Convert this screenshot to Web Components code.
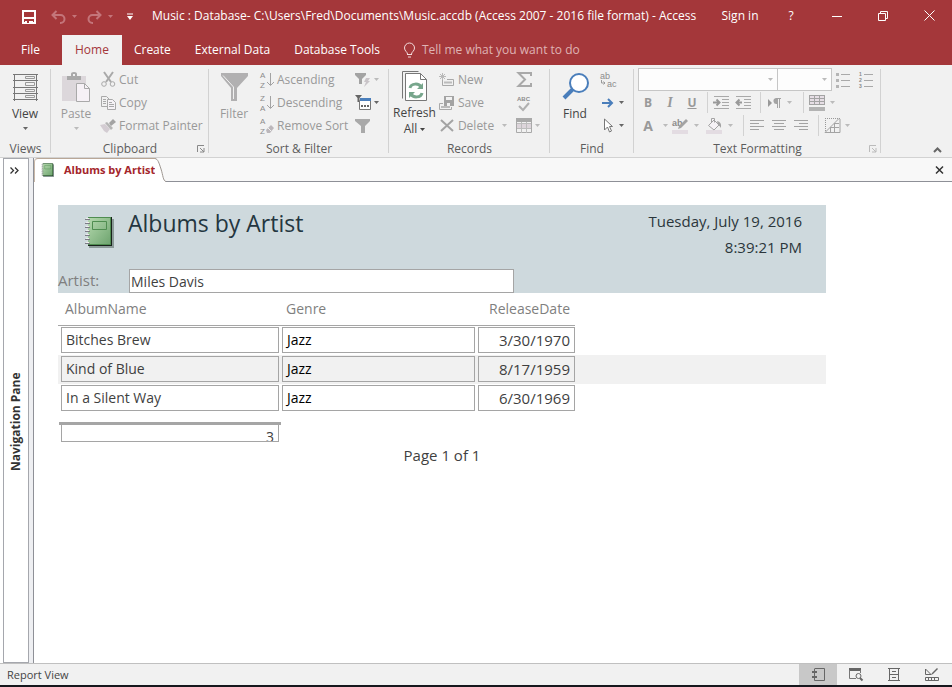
<!DOCTYPE html>
<html lang="en">
<head>
<meta charset="utf-8">
<meta name="viewport" content="width=device-width, initial-scale=1">
<title>Music : Database - Access</title>
<style>
  body {
    margin: 0;
    font: 12px/16px "Open Sans", "Noto Sans", sans-serif;
    color: #444;
  }
</style>
</head>
<body>
<access-window></access-window>

<script>
const svg = (w, h, body) =>
  `<svg width="${w}" height="${h}" viewBox="0 0 ${w} ${h}" fill="none" aria-hidden="true">${body}</svg>`

const notebook = (w, h) => /* html */`
  <svg width="${w}" height="${h}" viewBox="0 0 30 32" fill="none" aria-hidden="true">
    <defs><linearGradient id="g" x1="0" y1="0" x2="1" y2="1"><stop offset="0" stop-color="#b5d9ae"/><stop offset="1" stop-color="#6fa570"/></linearGradient></defs>
    <path d="M5 3h25v29H5z" fill="#8b9a98"/>
    <path d="M4 1h24v29H4z" fill="#18221a"/>
    <path d="M4 1h23v28H4z" fill="#4f8d50"/>
    <path d="M4 2h22v26H4z" fill="url(#g)"/>
    <path d="M8.500 5.500h14v8h-14z" stroke="#4f8d50"/>
    <path d="M1 3.500h5M1 7.500h5M1 11.500h5M1 15.500h5M1 19.500h5M1 23.500h5M1 27.500h5" stroke="#7b7c84"/>
    <path d="M2 2.500h3M2 6.500h3M2 10.500h3M2 14.500h3M2 18.500h3M2 22.500h3M2 26.500h3" stroke="#eee"/>
  </svg>`

const sortText = (top, bottom) => `
  <g font-family="Liberation Sans" font-size="8" fill="#8c8c8c"><text x="1" y="7">${top}</text><text x="1" y="17">${bottom}</text></g>`

const ICONS = {
  caret: svg(5, 3, '<path d="M0 0h5L2.500 3z" fill="currentColor"/>'),
  disk: svg(14, 14, '<path d="M1 1h12v12H1z" stroke="#fff" stroke-width="2"/><path d="M1 7h12v2H1zM3 11h8v3H3z" fill="#fff"/><path d="M5 11h2v2H5z" fill="#a4373a"/><path d="M7 11h2v2H7z" fill="#fff"/>'),
  undo: svg(15, 14, '<path d="M5.500 1 1.500 5l4 4M2 5h7.500a4 4 0 0 1 0 8H9" stroke="#c4757a" stroke-width="2"/>'),
  redo: svg(15, 14, '<path d="m9.500 1 4 4-4 4M13 5H5.500a4 4 0 0 0 0 8H6" stroke="#c4757a" stroke-width="2"/>'),
  customize: svg(6, 7, '<path d="M0 1h6" stroke="#fff"/><path d="M0 3h6L3 7z" fill="#fff"/>'),
  minimize: svg(10, 10, '<path d="M0 5.500h10" stroke="#fff"/>'),
  restore: svg(10, 10, '<path d="M.5 2.500h7v7h-7zM2.500 2.500v-2h7v7h-2" stroke="#fff"/>'),
  close: svg(11, 11, '<path d="m.5.5 10 10M10.500.5l-10 10" stroke="#fff"/>'),
  bulb: svg(11, 15, '<path d="M3.500 11c0-2-3-3-3-6a5 5 0 0 1 10 0c0 3-3 4-3 6M3 11.500h5M4 14h3" stroke="#f3dcdd"/>'),
  view: svg(25, 27, '<path d="M0 .5h25M0 6.500h25M0 13.500h25M0 19.500h25M0 25.500h25M1.500 0v27M23.500 0v27" stroke="#777"/><path d="M12.500 2.500h9v2h-9zM12.500 8.500h9v3h-9zM12.500 15.500h9v2h-9zM12.500 21.500h9v2h-9z" stroke="#999"/>'),
  paste: svg(28, 30, '<path d="M0 4h24v25H0z" fill="#dcd7db"/><path d="M5 8V4h4V2q0-2 3-2t3 2v2h4v4z" fill="#a9a9a9"/><path d="M11 2h2v2h-2z" fill="#f1f1f1"/><path d="M14.500 11.500h8l5 5v13h-13z" fill="#f6f1f6" stroke="#a9a9a9"/><path d="M22.500 11.500v5h5" stroke="#a9a9a9"/>'),
  cut: svg(15, 15, '<path d="m3 0 7 10M12 0 5 10" stroke="#a9a9a9" stroke-width="2"/><circle cx="3" cy="12" r="2.300" stroke="#a9a9a9"/><circle cx="11.500" cy="12" r="2.300" stroke="#a9a9a9"/>'),
  copy: svg(15, 14, '<path d="M6 10.500H.5V.5h5l3 3" stroke="#a9a9a9"/><path d="M6.500 3.500h5l3 3v7h-8z" fill="#f5f2f5" stroke="#a9a9a9"/><path d="M2 3.500h3M2 5.500h3M2 7.500h3M8 6.500h3M8 8.500h5M8 10.500h5" stroke="#a9a9a9"/>'),
  painter: svg(16, 14, '<path d="m0 6 5-1 5 5-3 4-3-2z" fill="#d3ccd2"/><path d="m5 4 2-1 6 6-2 2z" fill="#b5b5b5"/><path d="m9 4 4-4 3 3-5 4z" fill="#a3a3a3"/>'),
  filter: svg(27, 28, '<path d="M0 0h27v3L16 15v13h-6V15L0 3z" fill="#b1b0b1"/><path d="M2 2.500 12.500 14v12" stroke="#f1f1f1"/>'),
  asc: svg(15, 18, sortText('A', 'Z') + '<path d="M11.500 2v12M8 11l3.500 3.500L15 11" stroke="#a3a3a3"/>'),
  desc: svg(15, 18, sortText('Z', 'A') + '<path d="M11.500 2v12M8 11l3.500 3.500L15 11" stroke="#a3a3a3"/>'),
  unsort: svg(15, 18, sortText('A', 'Z') + '<path d="m7 13 5-5 3 3-4 5H8z" fill="#bcb7bb"/><path d="m9 11 3 3" stroke="#f1f1f1"/>'),
  selection: svg(16, 16, '<path d="M0 1h11v2L7 7v5H4V7L0 3z" fill="#a3a3a3"/><path d="m11 6h4l-2 3h2l-6 6 2-5H9z" fill="#c9c4c8"/>'),
  advanced: svg(16, 16, '<path d="M0 0h7L4.500 3v4h-2V3z" fill="#666"/><path d="M4.500 5.500h11v9h-11z" fill="#fff" stroke="#777"/><path d="M5 3h11v3H5z" fill="#4a7ebb"/><path d="M6 11h2M9 11h2M12 11h2" stroke="#666" stroke-width="2"/>'),
  toggle: svg(16, 14, '<path d="M0 0h15v2L10 7v7H6V7L0 2z" fill="#a9a9a9"/>'),
  refresh: svg(25, 31, '<path d="M.5 27.500V.5h16" stroke="#777"/><path d="M3.500 2.500h15l6 6v21h-21z" fill="#fff" stroke="#777"/><path d="M18.500 2.500v6h6" stroke="#777"/><path d="M8 17c1-5 9-5 11-1M20 22c-1 5-9 5-11 1" stroke="#77a68c" stroke-width="3"/><path d="M21 12v6h-6zM7 27v-6h6z" fill="#77a68c"/>'),
  newrec: svg(15, 14, '<path d="M3.500 6v6.500h11v-6H8" stroke="#a9a9a9"/><path d="M5 8.500h8v2H5z" fill="#bbb"/><path d="M3.500 0v7M0 3.500h7M1 1l5 5M6 1 1 6" stroke="#b9b9b9"/>'),
  saverec: svg(16, 16, '<path d="M4 8.500H.5v6h12V12" stroke="#a9a9a9"/><path d="M2 11h9v2H2z" fill="#bbb"/><path d="M5 1h10v10H5z" fill="#a3a3a3"/><path d="M7 2h6v3H7zM8 8h3v3H8z" fill="#f1f1f1"/>'),
  del: svg(14, 13, '<path d="m1 1 12 11M13 1 1 12" stroke="#a3a3a3" stroke-width="2"/>'),
  sum: svg(15, 15, '<path d="M14 4V1H1.500L8 7.500 1.500 14H14v-3" stroke="#a9a9a9" stroke-width="2"/>'),
  spell: svg(16, 18, '<text x="1" y="7" font-size="6" font-weight="bold" font-family="Liberation Sans" fill="#8c8c8c">ABC</text><path d="m3 12 4 4 6-7" stroke="#b0b0b0" stroke-width="2"/>'),
  more: svg(16, 15, '<path d="M.5.5h15v14H.5z" stroke="#a9a9a9"/><path d="M0 0h16v4H0z" fill="#a9a9a9"/><path d="M1 6h14v4H1z" fill="#ddd5db"/><path d="M1 5.500h14M1 10.500h14M5.500 4v11M10.500 4v11" stroke="#bdbdbd"/>'),
  find: svg(27, 28, '<path d="m11 16-9 9" stroke="#4a7ebb" stroke-width="4"/><circle cx="17" cy="10" r="9" fill="#fff" stroke="#4a7ebb" stroke-width="2"/>'),
  replace: svg(17, 18, '<g font-family="Liberation Sans" font-size="9" fill="#8c8c8c"><text x="0" y="8">ab</text><text x="7" y="16">ac</text></g><path d="M1.500 9v3H5M3.500 10.500 5 12l-1.500 1.500" stroke="#999"/>'),
  goto: svg(12, 10, '<path d="M0 5h10M6 1l4 4-4 4" stroke="#4a7ebb" stroke-width="2"/>'),
  pointer: svg(10, 15, '<path d="M1.500 1v11l3-3 2 5 2-1-2-4.500h3z" fill="#fff" stroke="#777"/>'),
  bullets: svg(14, 16, '<path d="M5 2.500h9M5 8.500h9M5 14.500h9" stroke="#a9a9a9"/><path d="M0 2.500h3M0 8.500h3M0 14.500h3" stroke="#b5b5b5" stroke-width="3"/>'),
  numbers: svg(15, 18, '<path d="M6 3.500h9M6 9.500h9M6 15.500h9" stroke="#a9a9a9"/><g font-family="Liberation Sans" font-size="5" font-weight="bold" fill="#888"><text x="1" y="5">1</text><text x="1" y="11">2</text><text x="1" y="17">3</text></g>'),
  indent: svg(17, 13, '<path d="M1 .5h15M9 3.500h7M9 6.500h7M9 9.500h7M1 12.500h15" stroke="#a9a9a9"/><path d="M0 6.500h6M3.500 3.500l3 3-3 3" stroke="#999" stroke-width="2"/>'),
  outdent: svg(17, 13, '<path d="M1 .5h15M9 3.500h7M9 6.500h7M9 9.500h7M1 12.500h15" stroke="#a9a9a9"/><path d="M1 6.500h6M4.500 3.500l-3 3 3 3" stroke="#999" stroke-width="2"/>'),
  direction: svg(13, 10, '<path d="M0 1v8l4-4z" fill="#999"/><path d="M8 0h5v1h-1v9h-1V1h-1v9H9V6a3 3 0 0 1-1-6" fill="#a3a3a3"/>'),
  gridfill: svg(16, 16, '<path d="M0 0h16v10H0z" fill="#a3a3a3"/><path d="M1 1h4v2H1zM6 1h4v2H6zM11 1h4v2h-4zM1 4h4v2H1zM6 4h4v2H6zM11 4h4v2h-4zM1 7h4v2H1zM6 7h4v2H6zM11 7h4v2h-4z" fill="#e6dee5"/><path d="M0 12h16v4H0z" fill="#b3b3b3"/>'),
  highlight: svg(17, 18, '<path d="M0 13h16v4H0z" fill="#e3dce2"/><text x="0" y="9" font-size="9" font-weight="bold" font-family="Liberation Sans" fill="#8c8c8c">ab</text><path d="m14 2 2 2-7 7-3 1 1-3z" fill="#a3a3a3"/>'),
  bucket: svg(17, 18, '<path d="M0 13h16v4H0z" fill="#e3dce2"/><path d="M2.500 8.500 8 3l5 5-5 5zM5.500 6V1.500h3v4" fill="#f5f2f5" stroke="#a3a3a3"/><path d="M11 4q5 1 4 7-1-2-3-3z" fill="#a3a3a3"/>'),
  left: svg(14, 11, '<path d="M0 .5h14M0 3.500h9M0 6.500h14M0 9.500h9" stroke="#a3a3a3"/>'),
  center: svg(14, 11, '<path d="M0 .5h14M2 3.500h10M0 6.500h14M2 9.500h10" stroke="#a3a3a3"/>'),
  right: svg(14, 11, '<path d="M0 .5h14M5 3.500h9M0 6.500h14M5 9.500h9" stroke="#a3a3a3"/>'),
  gridlines: svg(15, 15, '<path d="M0 .5h15M.5 0v15" stroke="#999" stroke-dasharray="1 1"/><path d="M0 14.500h15V1M0 14.500l14-14M5.500 9v5M9.500 5v9M5 9.500h9M9 5.500h5" stroke="#a3a3a3"/>'),
  launcher: svg(8, 8, '<path d="M.5 7V.5H7" stroke="currentColor"/><path d="M3 3l4 4M7 3v4H3" stroke="currentColor"/>'),
  collapse: svg(9, 6, '<path d="m1 5 3.500-3.500L8 5" stroke="#666" stroke-width="2"/>'),
  expand: svg(9, 7, '<path d="m.5.5 3 3-3 3M5 .5l3 3-3 3" stroke="#333" stroke-width="1.300"/>'),
  closeTab: svg(9, 8, '<path d="m1 .5 7 7M8 .5l-7 7" stroke="#333" stroke-width="1.500"/>'),
  reportView: svg(13, 13, '<path d="M3 .5h9.500v12H2.500V.5" stroke="#666"/><path d="M0 4h5M0 9h5" stroke="#666" stroke-width="2"/>'),
  preview: svg(14, 13, '<path d="M0 0h12v3H0z" fill="#666"/><path d="M.5 2v8.500H7M11.500 2v3" stroke="#777"/><circle cx="9.500" cy="8" r="2.500" stroke="#666"/><path d="m11 10 2.500 2.500" stroke="#666" stroke-width="2"/>'),
  layout: svg(12, 13, '<path d="M0 .5h12M1 6.500h10M0 12.500h12M1.500 0v13M10.500 0v13" stroke="#666"/><path d="M4 3.500h4M4 9.500h4" stroke="#666"/>'),
  design: svg(14, 13, '<path d="M.5 1v5.500H6zM.5 9.500h13v3H.5zM3.500 10v2M6.500 10v2M9.500 10v2" stroke="#666"/><path d="m6 7 1-2 5-5 1 1-5 5z" fill="#666"/>'),
  notebookBig: notebook(30, 32),
  notebookSmall: notebook(13, 14)
}

// Shared reset for the buttons that live inside each shadow root
const BUTTON_CSS = `
  button {
    border: 0;
    padding: 0;
    background: none;
    font: inherit;
    color: inherit;
    display: flex;
    align-items: center;
    justify-content: center;
  }
  svg { display: block; flex: none; overflow: visible; }
`

class AccessElement extends HTMLElement {
  constructor () {
    super()
    this.shadow = this.attachShadow({ mode: 'open' })
  }

  connectedCallback () {
    this.shadow.innerHTML = this.template()
  }
}

class TitleBar extends AccessElement {
  template () {
    return /* html */`
      <style>
        ${BUTTON_CSS}
        :host {
          display: flex;
          align-items: center;
          height: 35px;
          background: #a4373a;
          color: #fff;
        }
        .quick { display: flex; align-items: center; padding-left: 22px; margin-bottom: 2px; }
        .quick button { height: 20px; }
        .faded { color: #c4757a; gap: 6px; margin-left: 10px; }
        .redo { margin-right: 4px; }
        .quick .undo { margin-left: 15px; }
        h1 { flex: 1; margin: 0 0 4px 19px; font: inherit; white-space: nowrap; overflow: hidden; }
        nav { display: flex; margin-bottom: 4px; }
        nav button { width: 46px; height: 30px; }
        nav .sign { width: 56px; }
      </style>
      <div class="quick">
        <button aria-label="Save">${ICONS.disk}</button>
        <button class="faded undo" aria-label="Undo">${ICONS.undo}${ICONS.caret}</button>
        <button class="faded redo" aria-label="Redo">${ICONS.redo}${ICONS.caret}</button>
        <button class="faded" aria-label="Customize toolbar">${ICONS.customize}</button>
      </div>
      <h1>Music : Database- C:\\Users\\Fred\\Documents\\Music.accdb (Access 2007 - 2016 file format) - Access</h1>
      <nav>
        <button class="sign">Sign in</button>
        <button>?</button>
        <button aria-label="Minimize">${ICONS.minimize}</button>
        <button aria-label="Restore">${ICONS.restore}</button>
        <button aria-label="Close">${ICONS.close}</button>
      </nav>`
  }
}
customElements.define('title-bar', TitleBar)

class RibbonTabs extends AccessElement {
  template () {
    return /* html */`
      <style>
        ${BUTTON_CSS}
        :host {
          display: flex;
          height: 30px;
          background: #a4373a;
          color: #fff;
        }
        button { padding: 0 12px; white-space: nowrap; }
        .file { padding: 0 22px 0 21px; }
        .active { padding: 0 13px; background: #f1f1f1; color: #a4373a; }
        .tell { color: #dfb3b4; gap: 7px; }
      </style>
      <button class="file">File</button>
      <button class="active">Home</button>
      <button>Create</button>
      <button>External Data</button>
      <button>Database Tools</button>
      <button class="tell">${ICONS.bulb}Tell me what you want to do</button>`
  }
}
customElements.define('ribbon-tabs', RibbonTabs)

// attributes: icon, large, menu (draws the caret), off (greyed), label
class RibbonButton extends AccessElement {
  template () {
    const icon = this.getAttribute('icon')
    const label = this.getAttribute('label')
    return /* html */`
      <style>
        ${BUTTON_CSS}
        :host { display: block; color: #444; }
        :host([off]) { color: #999; }
        button { gap: var(--gap, 3px); height: 23px; white-space: nowrap; }
        .icon { display: flex; align-items: center; justify-content: center; min-width: 16px; }
        .caret { color: #666; padding: 0 2px; }
        :host([off]) .caret { color: #bbb; }
        :host([large]) button {
          flex-direction: column;
          justify-content: flex-start;
          gap: 0;
          height: 69px;
          min-width: 42px;
        }
        :host([large]) .icon { height: 38px; }
        :host([large]) .caret { padding: 5px 0; }
      </style>
      <button ${label ? `aria-label="${label}"` : ''}>
        ${icon ? `<span class="icon">${ICONS[icon]}</span>` : ''}
        <slot></slot>
        ${this.hasAttribute('menu') ? `<span class="caret">${ICONS.caret}</span>` : ''}
      </button>`
  }
}
customElements.define('ribbon-button', RibbonButton)

class RibbonGroup extends AccessElement {
  template () {
    const launcher = this.hasAttribute('launcher')
    return /* html */`
      <style>
        ${BUTTON_CSS}
        :host {
          display: grid;
          grid-template-rows: 69px 1fr;
          padding-top: 3px;
          background: linear-gradient(#d2d2d2, #d2d2d2) right 4px / 1px 84px no-repeat;
        }
        .body { display: flex; }
        footer {
          display: grid;
          align-items: end;
          text-align: center;
          color: #5c5c5c;
        }
        :host([launcher]) footer { grid-template-columns: 16px 1fr 16px; }
        :host([launcher]) span { grid-column: 2; }
        footer button { margin-bottom: 4px; color: var(--launcher, #888); }
      </style>
      <div class="body"><slot></slot></div>
      <footer>
        <span>${this.getAttribute('name')}</span>
        ${launcher ? `<button aria-label="${this.getAttribute('name')} options">${ICONS.launcher}</button>` : ''}
      </footer>`
  }
}
customElements.define('ribbon-group', RibbonGroup)

class ComboBox extends AccessElement {
  template () {
    return /* html */`
      <style>
        :host { display: grid; align-items: center; height: 23px; color: #bbb; }
        select, svg { grid-area: 1 / 1; }
        select {
          appearance: none;
          box-sizing: border-box;
          width: 100%;
          height: 23px;
          border: 1px solid #c6c6c6;
          border-radius: 0;
          background: #fdfdfd;
          font: inherit;
        }
        svg { justify-self: end; margin-right: 5px; pointer-events: none; }
      </style>
      <select aria-label="${this.getAttribute('label')}"><option></option></select>
      ${ICONS.caret}`
  }
}
customElements.define('combo-box', ComboBox)

// Refresh All carries its caret on the second line of the caption
class RefreshButton extends AccessElement {
  template () {
    return /* html */`
      <style>
        ${BUTTON_CSS}
        :host { display: block; }
        button { flex-direction: column; justify-content: flex-start; min-width: 42px; height: 69px; }
        .icon { display: flex; align-items: center; height: 38px; }
        .all { display: flex; align-items: center; gap: 3px; }
      </style>
      <button>
        <span class="icon">${ICONS.refresh}</span>
        <span>Refresh</span>
        <span class="all">All ${ICONS.caret}</span>
      </button>`
  }
}
customElements.define('refresh-button', RefreshButton)

class AccessRibbon extends AccessElement {
  template () {
    return /* html */`
      <style>
        ${BUTTON_CSS}
        :host {
          display: flex;
          height: 92px;
          background: #f1f1f1;
          border-bottom: 1px solid #d2d2d2;
        }
        .views { min-width: 51px; }
        .clipboard { min-width: 158px; }
        .sort { min-width: 180px; }
        .records { min-width: 161px; }
        .find { min-width: 84px; }
        .format { min-width: 247px; --launcher: #bbb; }
        .pad { margin-left: 4px; }
        .stack { display: grid; grid-template-rows: repeat(3, 23px); margin-left: 3px; }
        .icons { margin-left: auto; padding-right: 8px; justify-items: start; --gap: 1px; }
        .rows { display: grid; grid-template-rows: repeat(3, 23px); margin-left: 4px; }
        .rows > div { display: flex; align-items: center; }
        .font { width: 140px; margin-right: -1px; }
        .size { width: 55px; margin-right: 3px; }
        .rows ribbon-button { min-width: 22px; }
        .rows ribbon-button[menu] { min-width: 34px; }
        .rows i { width: 1px; height: 21px; margin: 0 5px 0 3px; background: #d2d2d2; }
        b, u, em { min-width: 20px; text-align: center; font-weight: bold; }
        em { font-family: "Liberation Serif", serif; font-size: 14px; }
        .large { font-size: 14px; }
        .collapse { margin: 0 10px 4px auto; align-self: flex-end; }
      </style>
      <ribbon-group class="views" name="Views">
        <ribbon-button class="pad" icon="view" large menu>View</ribbon-button>
      </ribbon-group>
      <ribbon-group class="clipboard" name="Clipboard" launcher>
        <ribbon-button class="pad" icon="paste" large menu off>Paste</ribbon-button>
        <div class="stack">
          <ribbon-button icon="cut" off>Cut</ribbon-button>
          <ribbon-button icon="copy" off>Copy</ribbon-button>
          <ribbon-button icon="painter" off>Format Painter</ribbon-button>
        </div>
      </ribbon-group>
      <ribbon-group class="sort" name="Sort &amp; Filter">
        <ribbon-button class="pad" icon="filter" large off>Filter</ribbon-button>
        <div class="stack">
          <ribbon-button icon="asc" off>Ascending</ribbon-button>
          <ribbon-button icon="desc" off>Descending</ribbon-button>
          <ribbon-button icon="unsort" off>Remove Sort</ribbon-button>
        </div>
        <div class="stack icons">
          <ribbon-button icon="selection" menu off label="Selection"></ribbon-button>
          <ribbon-button icon="advanced" menu label="Advanced"></ribbon-button>
          <ribbon-button icon="toggle" off label="Toggle Filter"></ribbon-button>
        </div>
      </ribbon-group>
      <ribbon-group class="records" name="Records">
        <refresh-button class="pad"></refresh-button>
        <div class="stack">
          <ribbon-button icon="newrec" off>New</ribbon-button>
          <ribbon-button icon="saverec" off>Save</ribbon-button>
          <ribbon-button icon="del" off menu>Delete&nbsp;</ribbon-button>
        </div>
        <div class="stack icons">
          <ribbon-button icon="sum" off label="Totals"></ribbon-button>
          <ribbon-button icon="spell" off label="Spelling"></ribbon-button>
          <ribbon-button icon="more" menu off label="More"></ribbon-button>
        </div>
      </ribbon-group>
      <ribbon-group class="find" name="Find">
        <ribbon-button class="pad" icon="find" large>Find</ribbon-button>
        <div class="stack icons">
          <ribbon-button icon="replace" off label="Replace"></ribbon-button>
          <ribbon-button icon="goto" menu label="Go To"></ribbon-button>
          <ribbon-button icon="pointer" menu label="Select"></ribbon-button>
        </div>
      </ribbon-group>
      <ribbon-group class="format" name="Text Formatting" launcher>
        <div class="rows">
          <div>
            <combo-box class="font" label="Font"></combo-box>
            <combo-box class="size" label="Font Size"></combo-box>
            <ribbon-button icon="bullets" off label="Bullets"></ribbon-button>
            <ribbon-button icon="numbers" off label="Numbering"></ribbon-button>
          </div>
          <div>
            <ribbon-button off><b>B</b></ribbon-button>
            <ribbon-button off><em>I</em></ribbon-button>
            <ribbon-button off><u>U</u></ribbon-button>
            <i></i>
            <ribbon-button icon="indent" off label="Increase Indent"></ribbon-button>
            <ribbon-button icon="outdent" off label="Decrease Indent"></ribbon-button>
            <i></i>
            <ribbon-button icon="direction" menu off label="Text Direction"></ribbon-button>
            <i></i>
            <ribbon-button icon="gridfill" menu off label="Alternate Row Color"></ribbon-button>
          </div>
          <div>
            <ribbon-button menu off><b class="large">A</b></ribbon-button>
            <ribbon-button icon="highlight" menu off label="Highlight"></ribbon-button>
            <ribbon-button icon="bucket" menu off label="Background Color"></ribbon-button>
            <i></i>
            <ribbon-button icon="left" off label="Align Left"></ribbon-button>
            <ribbon-button icon="center" off label="Center"></ribbon-button>
            <ribbon-button icon="right" off label="Align Right"></ribbon-button>
            <i></i>
            <ribbon-button icon="gridlines" menu off label="Gridlines"></ribbon-button>
          </div>
        </div>
      </ribbon-group>
      <button class="collapse" aria-label="Collapse the Ribbon">${ICONS.collapse}</button>`
  }
}
customElements.define('access-ribbon', AccessRibbon)

class NavigationPane extends AccessElement {
  template () {
    return /* html */`
      <style>
        ${BUTTON_CSS}
        :host {
          display: flex;
          flex-direction: column;
          width: 24px;
          margin-left: 3px;
          border: 1px solid #a5a7ad;
          background: #fff;
        }
        .open { height: 23px; padding-right: 4px; }
        .title {
          flex: 1;
          writing-mode: vertical-rl;
          transform: rotate(180deg);
          font-weight: bold;
          color: #333;
        }
      </style>
      <button class="open" aria-label="Open pane">${ICONS.expand}</button>
      <button class="title">Navigation Pane</button>`
  }
}
customElements.define('navigation-pane', NavigationPane)

class DocumentTabs extends AccessElement {
  template () {
    return /* html */`
      <style>
        ${BUTTON_CSS}
        :host {
          display: flex;
          height: 24px;
          background: linear-gradient(#8e9097, #8e9097) bottom / 100% 1px no-repeat #f8f8f8;
        }
        .tab {
          gap: 10px;
          padding: 0 0 2px 6px;
          border-top: 1px solid #b9a797;
          border-left: 1px solid #c9b8a8;
          border-top-left-radius: 4px;
          background: #fff;
          color: #a4262c;
          font-size: 11px;
          font-weight: bold;
        }
        .edge { margin-left: -3px; }
        .close { margin-left: auto; padding: 0 8px; }
      </style>
      <button class="tab">${ICONS.notebookSmall}Albums by Artist</button>
      <svg class="edge" width="14" height="24" viewBox="0 0 14 24" aria-hidden="true">
        <path d="M3 .5C6 1 7 5 9 11s2 12 5 12.500V24H3z" fill="#fff"/>
        <path d="M3 .5C6 1 7 5 9 11s2 12 5 12.500" fill="none" stroke="#9d9690"/>
      </svg>
      <button class="close" aria-label="Close Albums by Artist">${ICONS.closeTab}</button>`
  }
}
customElements.define('document-tabs', DocumentTabs)

const ALBUMS = [
  ['Bitches Brew', 'Jazz', '3/30/1970'],
  ['Kind of Blue', 'Jazz', '8/17/1959'],
  ['In a Silent Way', 'Jazz', '6/30/1969']
]

class AlbumsReport extends AccessElement {
  template () {
    const rows = ALBUMS.map(([name, genre, date]) => /* html */`
      <tr><td><div>${name}</div></td><td class="genre"><div>${genre}</div></td><td class="date"><div>${date}</div></td><td></td></tr>`).join('')
    return /* html */`
      <style>
        svg { display: block; }
        :host {
          display: block;
          max-width: 768px;
          padding: 23px 24px 0;
          font-size: 14px;
          line-height: 20px;
          color: #3f3f3f;
        }
        header {
          display: grid;
          grid-template-columns: 70px 386px 1fr;
          grid-template-rows: 64px 24px;
          background: #ced9dd;
        }
        .logo { padding: 11px 0 0 26px; }
        h2 { margin: 0; font-size: 23px; font-weight: normal; line-height: 36px; color: #243640; }
        .when { text-align: right; padding: 3px 24px 0 0; line-height: 26px; color: #2b363b; }
        .when, label, .date, footer { font-size: 15px; }
        label { color: #7f7f7f; line-height: 22px; }
        input {
          box-sizing: border-box;
          width: 385px;
          height: 24px;
          margin-left: 1px;
          border: 1px solid #a5a5a5;
          padding: 0 1px;
          font: inherit;
          color: #3f3f3f;
        }
        table { width: 100%; border-spacing: 0; table-layout: fixed; }
        th {
          height: 32px;
          padding: 0 5px 0 7px;
          border-bottom: 1px solid #a5a5a5;
          color: #7f7f7f;
          font-weight: normal;
          text-align: left;
        }
        th:last-child { border: 0; }
        .name { width: 209px; }
        .kind { width: 184px; }
        .day { width: 88px; }
        td { padding: 1px 0 2px 3px; }
        td div { height: 24px; line-height: 24px; border: 1px solid #a5a5a5; padding: 0 4px; }
        tbody tr:nth-child(even) { background: #f1f1f1; }
        .genre { color: #000; }
        .date, .day { text-align: right; }
        output {
          box-sizing: border-box;
          display: block;
          width: 222px;
          margin: 9px 0 0 1px;
          border-top: 3px solid #a5a5a5;
          padding: 0 2px;
          text-align: right;
        }
        output div { height: 16px; line-height: 23px; border: 1px solid #a5a5a5; border-top: 0; padding: 0 4px; overflow: hidden; }
        footer { text-align: center; margin-top: 3px; }
      </style>
      <header>
        <div class="logo">${ICONS.notebookBig}</div>
        <h2>Albums by Artist</h2>
        <div class="when">Tuesday, July 19, 2016<br>8:39:21 PM</div>
        <label for="artist">Artist:</label>
        <input id="artist" value="Miles Davis" readonly>
      </header>
      <table>
        <thead><tr><th class="name">AlbumName</th><th class="kind">Genre</th><th class="day">ReleaseDate</th><th></th></tr></thead>
        <tbody>${rows}</tbody>
      </table>
      <output aria-label="Album count"><div>3</div></output>
      <footer>Page 1 of 1</footer>`
  }
}
customElements.define('albums-report', AlbumsReport)

class StatusBar extends AccessElement {
  template () {
    return /* html */`
      <style>
        ${BUTTON_CSS}
        :host {
          display: flex;
          align-items: center;
          height: 21px;
          padding: 0 1px 0 7px;
          background: #f1f1f1;
          border-top: 1px solid #c0c0c0;
          border-bottom: 2px solid #16171d;
          font-size: 11px;
        }
        span { flex: 1; }
        button { width: 38px; height: 21px; }
        .on { background: #c8c8c8; }
      </style>
      <span>Report View</span>
      <button class="on" aria-label="Report View">${ICONS.reportView}</button>
      <button aria-label="Print Preview">${ICONS.preview}</button>
      <button aria-label="Layout View">${ICONS.layout}</button>
      <button aria-label="Design View">${ICONS.design}</button>`
  }
}
customElements.define('status-bar', StatusBar)

class AccessWindow extends AccessElement {
  template () {
    return /* html */`
      <style>
        :host { display: flex; flex-direction: column; height: 100vh; overflow: hidden; background: #fff; }
        .work { flex: 1; display: flex; min-height: 0; }
        main { flex: 1; min-width: 0; margin-left: 4px; border-left: 1px solid #8e9097; box-shadow: -4px 0 #eeeff2; }
      </style>
      <title-bar></title-bar>
      <ribbon-tabs></ribbon-tabs>
      <access-ribbon></access-ribbon>
      <div class="work">
        <navigation-pane></navigation-pane>
        <main>
          <document-tabs></document-tabs>
          <albums-report></albums-report>
        </main>
      </div>
      <status-bar></status-bar>`
  }
}
customElements.define('access-window', AccessWindow)
</script>
</body>
</html>
